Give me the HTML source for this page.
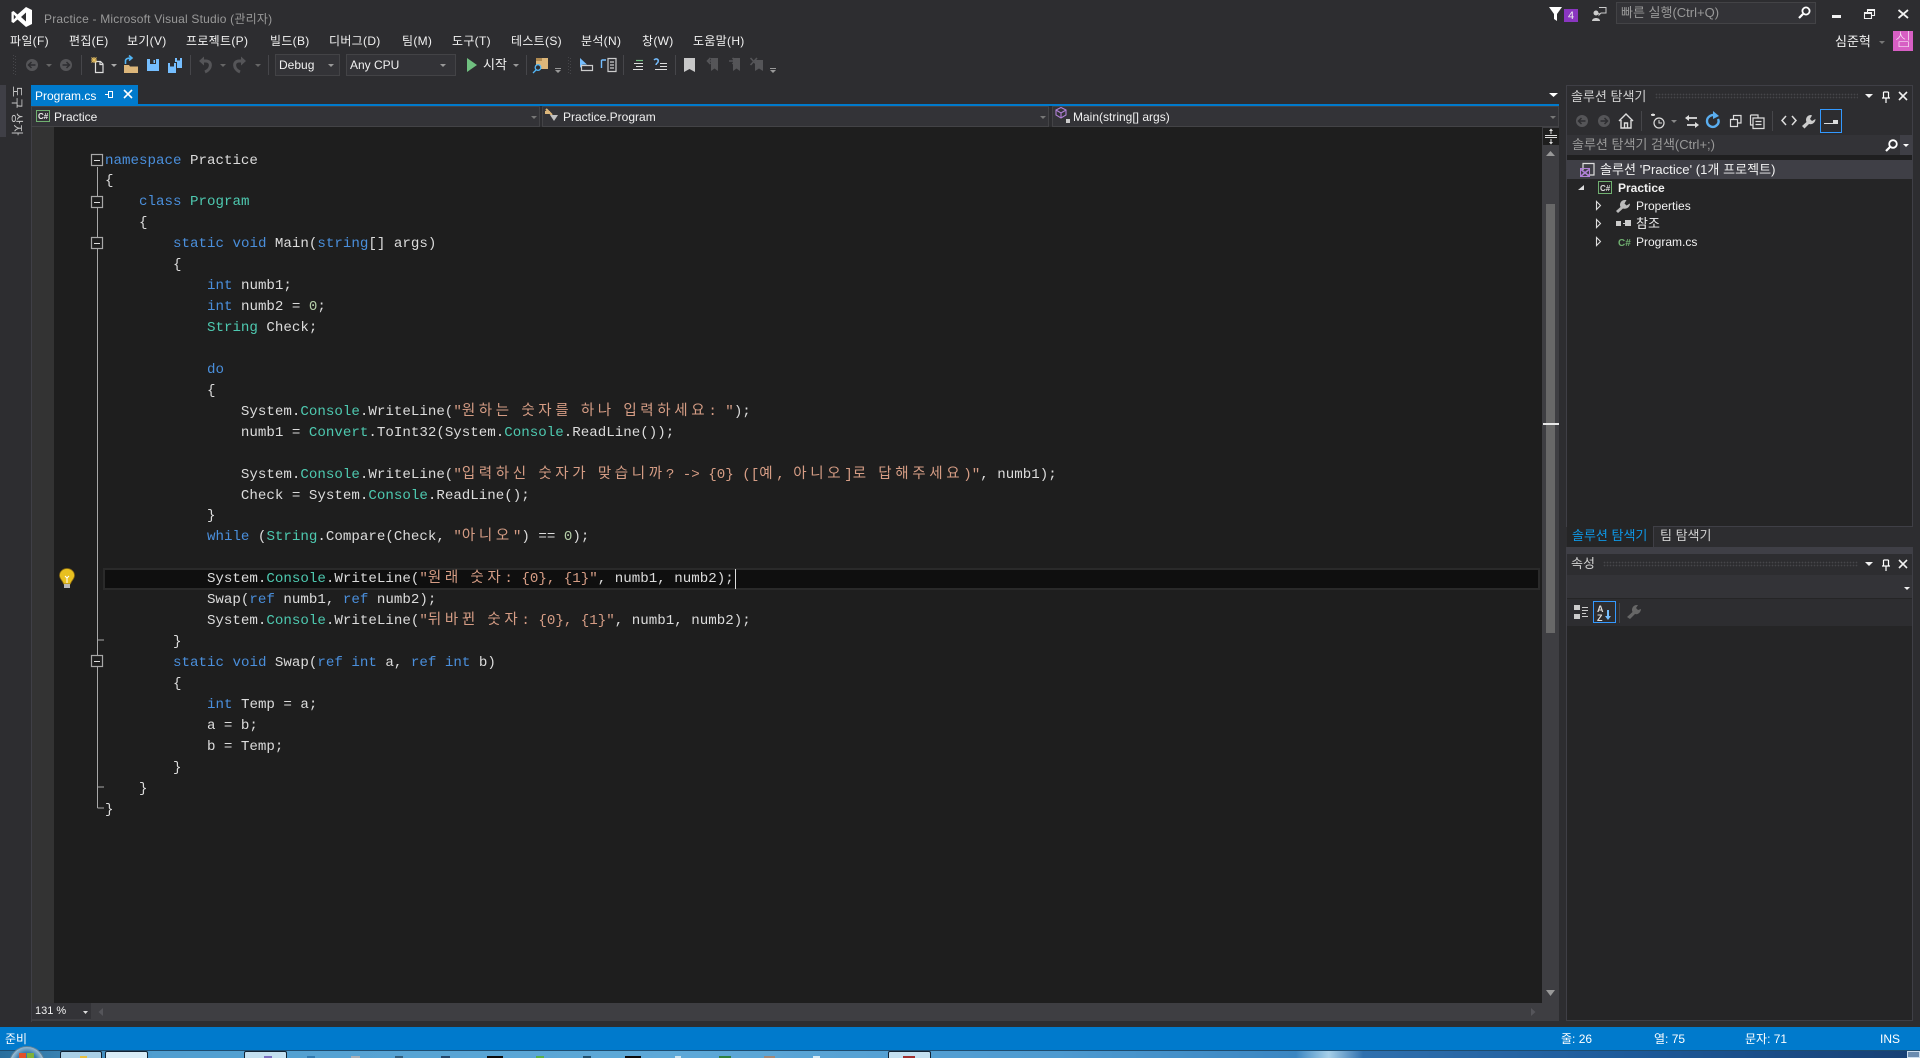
<!DOCTYPE html>
<html lang="ko"><head><meta charset="utf-8"><title>Practice - Microsoft Visual Studio</title>
<style>
html,body{margin:0;padding:0;width:1920px;height:1058px;overflow:hidden;background:#2d2d30}
body{position:relative;font-family:"Liberation Sans","Noto Sans CJK KR",sans-serif;font-size:12px;color:#f1f1f1}
.a{position:absolute}
.t{position:absolute;white-space:pre;line-height:16px;font-size:12px;color:#f1f1f1}
.m{top:33px;letter-spacing:.3px}
.h{font-size:13px}
#code{position:absolute;left:105px;top:150.5px;font-family:"Liberation Mono",monospace;font-size:14.17px;color:#dcdcdc;line-height:20.94px}
.l{white-space:pre;height:20.94px}
b{font-weight:normal;color:#4a8fdc}
u{text-decoration:none;color:#4ec9b0}
em{font-style:normal;color:#d69d85}
var{font-style:normal;color:#b5cea8}
small{font-family:"Noto Sans CJK KR",sans-serif;font-size:14.5px;letter-spacing:3.66px;line-height:0}
svg{position:absolute;left:0;top:0;overflow:visible}
</style></head><body>

<!-- left strip -->
<div class="a" style="left:0;top:85px;width:6px;height:52px;background:#3f3f46"></div>
<div class="t" style="left:8px;top:86px;height:50px;color:#c8c8c8;writing-mode:vertical-rl;text-orientation:sideways;line-height:18px;letter-spacing:.5px;font-size:12px">도구 상자</div>

<!-- tab + nav -->
<div class="a" style="left:31px;top:85px;width:107px;height:19px;background:#007acc"></div>
<div class="a" style="left:31px;top:104px;width:1528px;height:2px;background:#007acc"></div>
<div class="t" style="left:35px;top:88px;color:#fff">Program.cs</div>
<div class="a" style="left:31px;top:106px;width:509px;height:21px;background:#333337;box-sizing:border-box;border:1px solid #434346"></div>
<div class="a" style="left:542px;top:106px;width:507px;height:21px;background:#333337;box-sizing:border-box;border:1px solid #434346"></div>
<div class="a" style="left:1052px;top:106px;width:507px;height:21px;background:#333337;box-sizing:border-box;border:1px solid #434346"></div>
<div class="t" style="left:54px;top:109px">Practice</div>
<div class="t" style="left:563px;top:109px">Practice.Program</div>
<div class="t" style="left:1073px;top:109px">Main(string[] args)</div>

<!-- editor -->
<div class="a" style="left:31px;top:127px;width:1px;height:895px;background:#3f3f46"></div>
<div class="a" style="left:32px;top:127px;width:22px;height:876px;background:#333333"></div>
<div class="a" style="left:54px;top:127px;width:1488px;height:876px;background:#1e1e1e"></div>
<div class="a" style="left:103px;top:568px;width:1437px;height:22px;box-sizing:border-box;background:#0f0f0f;border:2px solid #2a2a2a"></div>
<div class="a" style="left:735px;top:569px;width:1px;height:20px;background:#dcdcdc"></div>

<div id="code">
<div class="l"><b>namespace</b> Practice</div>
<div class="l">{</div>
<div class="l">    <b>class</b> <u>Program</u></div>
<div class="l">    {</div>
<div class="l">        <b>static</b> <b>void</b> Main(<b>string</b>[] args)</div>
<div class="l">        {</div>
<div class="l">            <b>int</b> numb1;</div>
<div class="l">            <b>int</b> numb2 = <var>0</var>;</div>
<div class="l">            <u>String</u> Check;</div>
<div class="l"> </div>
<div class="l">            <b>do</b></div>
<div class="l">            {</div>
<div class="l">                System.<u>Console</u>.WriteLine(<em>"<small>원하는</small> <small>숫자를</small> <small>하나</small> <small>입력하세요</small>: "</em>);</div>
<div class="l">                numb1 = <u>Convert</u>.ToInt32(System.<u>Console</u>.ReadLine());</div>
<div class="l"> </div>
<div class="l">                System.<u>Console</u>.WriteLine(<em>"<small>입력하신</small> <small>숫자가</small> <small>맞습니까</small>? -&gt; {0} ([<small>예</small>, <small>아니오</small>]<small>로</small> <small>답해주세요</small>)"</em>, numb1);</div>
<div class="l">                Check = System.<u>Console</u>.ReadLine();</div>
<div class="l">            }</div>
<div class="l">            <b>while</b> (<u>String</u>.Compare(Check, <em>"<small>아니오</small>"</em>) == <var>0</var>);</div>
<div class="l"> </div>
<div class="l">            System.<u>Console</u>.WriteLine(<em>"<small>원래</small> <small>숫자</small>: {0}, {1}"</em>, numb1, numb2);</div>
<div class="l">            Swap(<b>ref</b> numb1, <b>ref</b> numb2);</div>
<div class="l">            System.<u>Console</u>.WriteLine(<em>"<small>뒤바뀐</small> <small>숫자</small>: {0}, {1}"</em>, numb1, numb2);</div>
<div class="l">        }</div>
<div class="l">        <b>static</b> <b>void</b> Swap(<b>ref</b> <b>int</b> a, <b>ref</b> <b>int</b> b)</div>
<div class="l">        {</div>
<div class="l">            <b>int</b> Temp = a;</div>
<div class="l">            a = b;</div>
<div class="l">            b = Temp;</div>
<div class="l">        }</div>
<div class="l">    }</div>
<div class="l">}</div>
</div>

<!-- scrollbars -->
<div class="a" style="left:1542px;top:127px;width:17px;height:894px;background:#3e3e42"></div>
<div class="a" style="left:1543px;top:128px;width:16px;height:17px;background:#1e1e1e"></div>
<div class="a" style="left:1546px;top:204px;width:9px;height:429px;background:#686868"></div>
<div class="a" style="left:1543px;top:423px;width:16px;height:2px;background:#e8e8e8"></div>
<div class="a" style="left:32px;top:1003px;width:1510px;height:18px;background:#3e3e42"></div>
<div class="a" style="left:32px;top:1003px;width:59px;height:16px;background:#333337"></div>
<div class="t" style="left:35px;top:1003px;font-size:11px;color:#f1f1f1">131 %</div>

<!-- title / menu -->
<div class="t" style="left:44px;top:11px;color:#999;letter-spacing:.2px">Practice - Microsoft Visual Studio (관리자)</div>
<div class="t m" style="left:10px">파일(F)</div>
<div class="t m" style="left:69px">편집(E)</div>
<div class="t m" style="left:127px">보기(V)</div>
<div class="t m" style="left:186px">프로젝트(P)</div>
<div class="t m" style="left:270px">빌드(B)</div>
<div class="t m" style="left:329px">디버그(D)</div>
<div class="t m" style="left:402px">팀(M)</div>
<div class="t m" style="left:452px">도구(T)</div>
<div class="t m" style="left:511px">테스트(S)</div>
<div class="t m" style="left:581px">분석(N)</div>
<div class="t m" style="left:642px">창(W)</div>
<div class="t m" style="left:693px">도움말(H)</div>

<!-- toolbar combos -->
<div class="a" style="left:275px;top:54px;width:65px;height:22px;box-sizing:border-box;background:#333337;border:1px solid #434346"></div>
<div class="a" style="left:346px;top:54px;width:110px;height:22px;box-sizing:border-box;background:#333337;border:1px solid #434346"></div>
<div class="t" style="left:279px;top:57px">Debug</div>
<div class="t" style="left:350px;top:57px">Any CPU</div>
<div class="t h" style="left:483px;top:57px">시작</div>

<!-- top-right -->
<div class="a" style="left:1564px;top:9px;width:14px;height:13px;background:#8a36c0"></div>
<div class="t" style="left:1568px;top:8px;font-size:11px;color:#eee">4</div>
<div class="a" style="left:1616px;top:2px;width:200px;height:22px;box-sizing:border-box;background:#333337;border:1px solid #434346"></div>
<div class="t h" style="left:1621px;top:5px;color:#999">빠른 실행(Ctrl+Q)</div>
<div class="t h" style="left:1835px;top:34px;color:#f1f1f1">심준혁</div>
<div class="a" style="left:1893px;top:31px;width:20px;height:20px;background:#d75fc4"></div>
<div class="t" style="left:1893px;top:29px;width:20px;text-align:center;font-size:18px;line-height:22px;color:#fff;font-weight:100">심</div>

<!-- solution explorer -->
<div class="a" style="left:1566px;top:85px;width:347px;height:442px;box-sizing:border-box;background:#252526;border:1px solid #3f3f46"></div>
<div class="a" style="left:1567px;top:86px;width:345px;height:49px;background:#2d2d30"></div>
<div class="t h" style="left:1571px;top:89px;color:#d0d0d0">솔루션 탐색기</div>
<div class="a" style="left:1655px;top:93px;width:203px;height:6px;background-image:radial-gradient(#46464a 35%,transparent 40%);background-size:3px 3px"></div>
<div class="a" style="left:1567px;top:135px;width:345px;height:20px;background:#333337"></div>
<div class="a" style="left:1900px;top:135px;width:12px;height:20px;background:#3f3f46"></div>
<div class="t h" style="left:1572px;top:137px;color:#999">솔루션 탐색기 검색(Ctrl+;)</div>
<div class="a" style="left:1567px;top:155px;width:345px;height:5px;background:#1f1f20"></div>
<div class="a" style="left:1567px;top:160px;width:345px;height:19px;background:#3f3f46"></div>
<div class="t h" style="left:1600px;top:162px;letter-spacing:.05px">솔루션 'Practice' (1개 프로젝트)</div>
<div class="t" style="left:1618px;top:180px;font-weight:bold">Practice</div>
<div class="t" style="left:1636px;top:198px">Properties</div>
<div class="t h" style="left:1636px;top:216px">참조</div>
<div class="t" style="left:1636px;top:234px">Program.cs</div>

<!-- tabs under explorer -->
<div class="a" style="left:1567px;top:527px;width:346px;height:20px;background:#2d2d30"></div>
<div class="a" style="left:1567px;top:526px;width:86px;height:21px;background:#252526"></div>
<div class="a" style="left:1653px;top:526px;width:1px;height:21px;background:#3f3f46"></div>
<div class="t h" style="left:1572px;top:528px;color:#0e97e6">솔루션 탐색기</div>
<div class="t h" style="left:1660px;top:528px;color:#d0d0d0">팀 탐색기</div>
<div class="a" style="left:1566px;top:547px;width:347px;height:7px;background:#3f3f46"></div>

<!-- properties -->
<div class="a" style="left:1566px;top:554px;width:347px;height:467px;box-sizing:border-box;background:#252526;border:1px solid #3f3f46;border-top:0"></div>
<div class="a" style="left:1567px;top:554px;width:345px;height:21px;background:#2d2d30"></div>
<div class="t h" style="left:1571px;top:556px;color:#d0d0d0">속성</div>
<div class="a" style="left:1603px;top:561px;width:255px;height:6px;background-image:radial-gradient(#46464a 35%,transparent 40%);background-size:3px 3px"></div>
<div class="a" style="left:1567px;top:575px;width:345px;height:23px;background:#333337"></div>
<div class="a" style="left:1567px;top:599px;width:345px;height:27px;background:#2d2d30"></div>

<!-- status -->
<div class="a" style="left:0;top:1027px;width:1920px;height:23px;background:#007acc"></div>
<div class="t" style="left:5px;top:1031px;color:#fff">준비</div>
<div class="t" style="left:1561px;top:1031px;color:#fff">줄: 26</div>
<div class="t" style="left:1654px;top:1031px;color:#fff">열: 75</div>
<div class="t" style="left:1745px;top:1031px;color:#fff">문자: 71</div>
<div class="t" style="left:1880px;top:1031px;color:#fff">INS</div>

<!-- taskbar -->
<div class="a" style="left:0;top:1050px;width:1920px;height:8px;background:linear-gradient(90deg,#2a6f9e 0,#4f9ed0 8%,#5ea9d8 35%,#4d9ad0 55%,#3a86c2 67.5%,#a6cfe8 69.2%,#2f70ae 71%,#1d5a9a 85%,#173f73 100%)"></div>
<div class="a" style="left:0;top:1050px;width:1920px;height:1px;background:#1d4d70"></div>
<div class="a" style="left:60px;top:1051px;width:42px;height:7px;background:#a9cfe6;border:1px solid #123;border-bottom:0;box-sizing:border-box;border-radius:2px 2px 0 0"></div>
<div class="a" style="left:105px;top:1051px;width:43px;height:7px;background:#d9ecf6;border:1px solid #123;border-bottom:0;box-sizing:border-box;border-radius:2px 2px 0 0"></div>
<div class="a" style="left:244px;top:1051px;width:43px;height:7px;background:#c4e0f0;border:1px solid #123;border-bottom:0;box-sizing:border-box;border-radius:2px 2px 0 0"></div>
<div class="a" style="left:888px;top:1051px;width:43px;height:7px;background:#c4e0f0;border:1px solid #123;border-bottom:0;box-sizing:border-box;border-radius:2px 2px 0 0"></div>
<div class="a" style="left:1907px;top:1051px;width:13px;height:7px;background:#6b8cb0;border:1px solid #cde;box-sizing:border-box"></div>
<div class="a" style="left:9px;top:1046px;width:36px;height:36px;box-sizing:border-box;border-radius:50%;border:1px solid #5f8298;background:radial-gradient(circle at 50% 45%,#2c6ca0 0,#3a7fb0 40%,#bcd3e2 70%,#dfe9f0 100%)"></div>
<div class="a" style="left:19px;top:1053px;width:7px;height:5px;background:#e0502a"></div>
<div class="a" style="left:27px;top:1053px;width:7px;height:5px;background:#7fb13a"></div>
<div class="a" style="left:80px;top:1056px;width:7px;height:2px;background:#e8c040"></div>
<div class="a" style="left:264px;top:1056px;width:8px;height:2px;background:#7a6fc0"></div>
<div class="a" style="left:307px;top:1056px;width:8px;height:2px;background:#2f7ab0"></div>
<div class="a" style="left:351px;top:1056px;width:9px;height:2px;background:#a8b0b8"></div>
<div class="a" style="left:395px;top:1056px;width:8px;height:2px;background:#2f5f80"></div>
<div class="a" style="left:441px;top:1056px;width:9px;height:2px;background:#24486c"></div>
<div class="a" style="left:487px;top:1056px;width:16px;height:2px;background:#0b0b0b"></div>
<div class="a" style="left:536px;top:1056px;width:8px;height:2px;background:#58b04a"></div>
<div class="a" style="left:583px;top:1056px;width:8px;height:2px;background:#20506e"></div>
<div class="a" style="left:625px;top:1056px;width:16px;height:2px;background:#0b0b0b"></div>
<div class="a" style="left:675px;top:1056px;width:6px;height:2px;background:#cfe6f2"></div>
<div class="a" style="left:719px;top:1056px;width:12px;height:2px;background:#2e8040"></div>
<div class="a" style="left:764px;top:1056px;width:11px;height:2px;background:#a08878"></div>
<div class="a" style="left:813px;top:1056px;width:7px;height:2px;background:#d8ecf6"></div>
<div class="a" style="left:903px;top:1056px;width:12px;height:2px;background:#a03030"></div>

<!-- icons -->
<svg width="1920" height="1058" viewBox="0 0 1920 1058" fill="none">
<!-- VS logo -->
<path fill="#fff" fill-rule="evenodd" d="M26 7L32 10V24L26 27L17.5 19.5L13.5 23L11.5 22V12L13.5 11L17.5 14.5ZM26 12.5L21 17L26 21.5ZM13.8 14.5V19.500L16 17Z"/>
<!-- grips -->
<g stroke="#46464a" stroke-dasharray="1 2"><path d="M13.500 55V75M15.500 56V75M568.500 57V74M570.500 58V74"/></g>
<!-- toolbar separators -->
<g fill="#46464a"><rect x="81" y="55" width="1" height="20"/><rect x="190" y="55" width="1" height="20"/><rect x="268" y="55" width="1" height="20"/><rect x="526" y="55" width="1" height="20"/><rect x="623" y="55" width="1" height="20"/><rect x="675" y="55" width="1" height="20"/></g>
<!-- back / fwd -->
<g fill="#555558"><circle cx="32" cy="65" r="6"/><circle cx="66" cy="65" r="6"/></g>
<g stroke="#2d2d30" stroke-width="1.5"><path d="M35.500 65H29M31.500 62L28.500 65L31.500 68"/><path d="M62.500 65H69M66.500 62L69.500 65L66.500 68"/></g>
<!-- dropdown arrows dim -->
<g fill="#666"><path d="M46 64H52L49 67Z"/><path d="M220 64H226L223 67Z"/><path d="M255 64H261L258 67Z"/></g>
<g fill="#aaa"><path d="M111 64H117L114 67Z"/><path d="M328 64H334L331 67Z" fill="#999"/><path d="M440 64H446L443 67Z" fill="#999"/><path d="M513 64H519L516 67Z" fill="#999"/></g>
<!-- new project -->
<path stroke="#ddd" stroke-width="1.200" d="M95.500 61.500H100.500L103 64V72.500H95.500ZM100 61.500V64.500H103"/><path stroke="#e8c060" stroke-width="1.100" d="M91 60H97M94 57V63M91.500 57.500L96.500 62.500M96.500 57.500L91.500 62.500"/>
<!-- open -->
<path fill="#dcb67a" d="M124 65H129L130 66.500H138V73H124Z"/><path stroke="#52b5f5" stroke-width="1.600" d="M125.500 64V61C125.500 59 127 58 131 58M129 55.500L132 58L129 60.500"/>
<!-- save -->
<path fill="#75beff" d="M147 59H159V71H147Z"/><path fill="#2d2d30" d="M150 59H156V64H150Z"/><path fill="#75beff" d="M153.500 60H155V63H153.500Z"/>
<!-- save all -->
<path fill="#75beff" d="M168 63H176V73H168ZM175 58H182V68H177V62H175Z"/><path fill="#2d2d30" d="M170 63H174V66.500H170ZM177 58H180V60.500H177Z"/>
<!-- undo / redo -->
<path stroke="#555558" stroke-width="3" d="M202 61L206 61C212 61 212 69 205 72"/><path fill="#555558" d="M199 61L204 56.500V65.500Z"/>
<path stroke="#555558" stroke-width="3" d="M243 61L239 61C233 61 233 69 240 72"/><path fill="#555558" d="M246 61L241 56.500V65.500Z"/>
<!-- play -->
<path fill="#70c080" d="M467 58L477 65L467 72Z"/>
<!-- find -->
<path fill="#dcb67a" d="M536 58H548V69H536Z"/><path fill="#b08a50" d="M536 58H542V61H536Z"/><circle cx="538" cy="67.500" r="2.800" fill="#2d2d30" stroke="#52b5f5" stroke-width="1.300"/><path stroke="#52b5f5" stroke-width="1.300" d="M536 70L533 73"/>
<path fill="#999" d="M555 68H561V69H555ZM555 70H561L558 73Z"/>
<!-- toolbar icons after grip -->
<path fill="#75beff" d="M580 58L587 64.500H582.500L580 68Z"/><path stroke="#ccc" stroke-width="1.200" d="M581.500 65.500H592.500V70.500H581.500Z"/>
<path stroke="#ccc" stroke-width="1.200" d="M608 58.500H616V71.500H608ZM610 62H614M610 65H614M610 68H614"/><path stroke="#75beff" stroke-width="1.400" d="M601.500 60H606M601.500 60V68"/>
<path stroke="#ddd" stroke-width="1.100" d="M634 63.500H643M636 66.500H643M633 69.500H643"/><path stroke="#70c080" stroke-width="1.200" d="M636 60.500H643"/>
<path stroke="#ddd" stroke-width="1.100" d="M660 63.500H667M660 66.500H667M655 69.500H667"/><path stroke="#75beff" stroke-width="1.500" d="M654 60C656 58 659 59 658 62C658 63 656 63 656 65"/>
<!-- bookmarks -->
<path fill="#c8c8c8" d="M684 58H695V72L689.500 69L684 72Z"/>
<g fill="#555558"><path d="M711 58H718V71L714.500 68.500L711 71Z"/><path d="M733 58H740V71L736.500 68.500L733 71Z"/><path d="M755 60H763V71L759 68.500L755 71Z"/></g>
<g stroke="#555558" stroke-width="1.600"><path d="M714 61H707.500M710.500 58L707.500 61L710.500 64"/><path d="M729 61H735.500M732.500 58L735.500 61L732.500 64"/><path d="M750.500 58L757 65M757 58L750.500 65"/></g>
<path fill="#999" d="M770 68H776V69H770ZM770 70H776L773 73Z"/>
<!-- tab pin x -->
<path stroke="#fff" stroke-width="1" d="M105 94.500H108.500M108.500 91.500V97.500H112.500V91.500Z"/>
<path stroke="#fff" stroke-width="1.600" d="M124 90L132 98M132 90L124 98"/>
<path fill="#fff" d="M1549 93H1558L1553.500 97Z"/>
<!-- nav icons -->
<rect x="36.500" y="110.500" width="13" height="11" stroke="#70b070"/><text x="38" y="119" font-family="Liberation Sans" font-size="8" fill="#eee" font-weight="bold">C#</text>
<path stroke="#dcb67a" stroke-width="2" d="M546 109L552 115"/><path fill="#c0c0c0" d="M550 115L558 115L554 121Z"/><rect x="545" y="111" width="5" height="3" fill="#dcb67a"/>
<path stroke="#b180d7" stroke-width="1.100" d="M1056 110L1061 107.500L1066 110V115L1061 118L1056 115ZM1056 110L1061 113L1066 110M1061 113V118"/><rect x="1066" y="119" width="4" height="4" fill="#ccc"/>
<g fill="#777"><path d="M531 116H537L534 119Z"/><path d="M1040 116H1046L1043 119Z"/><path d="M1550 116H1556L1553 119Z"/></g>
<!-- outlining -->
<g stroke="#a8a8a8" stroke-width="1">
<path d="M97.500 167V196M97.500 208V237M97.500 249V655M97.500 667V808" />
<path d="M97.500 640H104M97.500 787H104M97.500 808H104" />
</g>
<g stroke="#a8a8a8" fill="#1e1e1e" stroke-width="1.200">
<rect x="91.500" y="154.500" width="11" height="11"/><rect x="91.500" y="196.500" width="11" height="11"/><rect x="91.500" y="237.500" width="11" height="11"/><rect x="91.500" y="655.500" width="11" height="11"/>
</g>
<g stroke="#dcdcdc" stroke-width="1"><path d="M94 160.500H100M94 202.500H100M94 243.500H100M94 661.500H100"/></g>
<!-- bulb -->
<path fill="#e8c020" stroke="#8a6a10" stroke-width=".8" d="M67 568.500C71 568.500 74.500 571.500 74.500 575.500C74.500 579 71 581 70.500 584H63.500C63 581 59.500 579 59.500 575.500C59.500 571.500 63 568.500 67 568.500Z"/><rect x="64" y="584" width="6" height="4" fill="#b8b8b8"/><path stroke="#fff" stroke-width="1" d="M65 576L67 578L69 576M67 578V583"/>
<!-- splitter -->
<path stroke="#ddd" stroke-width="1" d="M1545 135.500H1557M1545 137.500H1557M1551 129V134M1551 139V144"/><path fill="#ddd" d="M1549 131L1551 128.500L1553 131ZM1549 142L1551 144.500L1553 142Z"/>
<!-- scroll arrows -->
<path fill="#999" d="M1546 156H1555L1550.500 151Z"/><path fill="#999" d="M1546 990H1555L1550.500 996Z"/>
<path fill="#55555a" d="M103 1008V1016L98.500 1012Z"/><path fill="#55555a" d="M1531 1008V1016L1535.500 1012Z"/>
<path fill="#ddd" d="M83 1011H88L85.500 1014Z"/>
<!-- top right -->
<path fill="#fff" d="M1549 7H1562L1557 14V21L1554 19V14Z"/>
<path stroke="#ccc" stroke-width="1" d="M1599 7.500H1606V13H1601L1599 15V13"/><circle cx="1596" cy="13" r="2.500" fill="#ccc"/><path fill="#ccc" d="M1592 21C1592 17 1600 17 1600 21Z"/>
<circle cx="1806" cy="11" r="3.600" stroke="#fff" stroke-width="1.800"/><path stroke="#fff" stroke-width="2.200" d="M1803 14L1799 18"/>
<rect x="1832" y="15" width="9" height="3" fill="#f1f1f1"/>
<path stroke="#f1f1f1" stroke-width="1.100" d="M1867.500 12V9.500H1874.500V15.500H1871.500M1864.500 12.500H1871.500V18.500H1864.500Z"/><path stroke="#f1f1f1" stroke-width="1" d="M1867.500 10.500H1874.500M1864.500 13.500H1871.500"/>
<path stroke="#f1f1f1" stroke-width="1.800" d="M1898.500 10L1908 18M1908 10L1898.500 18"/>
<path fill="#777" d="M1879 41H1885L1882 44Z"/>
<!-- SE title icons -->
<path fill="#f1f1f1" d="M1865 94H1873L1869 98Z"/><path stroke="#fff" stroke-width="1.200" d="M1883.500 92V98H1888.500V92M1883.500 92H1888.500M1882 98H1890M1886 98V103"/><path stroke="#f1f1f1" stroke-width="1.600" d="M1899 92L1907 100M1907 92L1899 100"/>
<path fill="#f1f1f1" d="M1865 562H1873L1869 566Z"/><path stroke="#fff" stroke-width="1.200" d="M1883.500 560V566H1888.500V560M1883.500 560H1888.500M1882 566H1890M1886 566V571"/><path stroke="#f1f1f1" stroke-width="1.600" d="M1899 560L1907 568M1907 560L1899 568"/>
<path fill="#f1f1f1" d="M1904 587H1910L1907 590Z"/>
<!-- SE toolbar -->
<g fill="#555558"><circle cx="1582" cy="121" r="6"/><circle cx="1604" cy="121" r="6"/></g>
<g stroke="#2d2d30" stroke-width="1.500"><path d="M1585.500 121H1579M1581.500 118L1578.500 121L1581.500 124"/><path d="M1600.500 121H1607M1604.500 118L1607.500 121L1604.500 124"/></g>
<path stroke="#ddd" stroke-width="1.400" d="M1619 121L1626 114L1633 121M1621 120V128H1631V120M1624.500 128V123H1627.500V128"/>
<g fill="#46464a"><rect x="1641" y="111" width="1" height="20"/><rect x="1772" y="111" width="1" height="20"/></g>
<circle cx="1659" cy="123" r="5" stroke="#ddd" stroke-width="1.200"/><path stroke="#ddd" d="M1659 120V123H1662M1651 114.500H1655"/><path fill="#ddd" d="M1653 113L1655 116H1651Z"/>
<path fill="#888" d="M1671 120H1677L1674 123Z"/>
<path stroke="#ddd" stroke-width="1.800" d="M1688 118H1697M1687 125H1696"/><path fill="#ddd" d="M1689 115V121L1685 118ZM1695 122V128L1699 125Z"/>
<path stroke="#5aaef0" stroke-width="2.400" d="M1717 116C1712 113 1707 117 1707 121C1707 126 1713 129 1717 125C1719 123 1719 121 1718 119"/><path fill="#5aaef0" d="M1713 111L1719 116L1713 119Z"/>
<path stroke="#ddd" stroke-width="1.200" d="M1730.500 119.500H1737.500V126.500H1730.500ZM1733.500 119V115.500H1741V123H1737.500"/>
<path stroke="#ddd" stroke-width="1.200" d="M1750.500 115H1758V118M1753 118H1764V128.500H1753ZM1755.500 121.500H1761.500M1755.500 124.500H1761.500M1750.500 115V125H1753"/>
<path stroke="#ddd" stroke-width="1.500" d="M1786 116L1782 120.500L1786 125M1792 116L1796 120.500L1792 125"/>
<path fill="#ccc" d="M1811 115C1807 115 1805 119 1806.500 122L1802 126L1804.500 128.500L1809 124C1812 125 1815.500 122.500 1815.500 119L1812 121L1810 119L1812 115.500Z"/>
<rect x="1820.500" y="109.500" width="21" height="23" stroke="#3399ff"/><path fill="#ddd" d="M1824 123H1833V120H1838V124H1824Z"/>
<!-- SE search -->
<circle cx="1893" cy="144" r="3.800" stroke="#fff" stroke-width="1.800"/><path stroke="#fff" stroke-width="2.200" d="M1890 147L1886 151"/><path fill="#fff" d="M1903 144H1909L1906 147Z"/>
<!-- tree -->
<path stroke="#ddd" stroke-width="1.200" d="M1583 170V163.500H1594V175H1588"/><path stroke="#b180d7" stroke-width="1.600" d="M1581 169.500L1589 176M1589 169.500L1581 176"/><rect x="1580.500" y="168.500" width="9" height="8" stroke="#b180d7"/>
<path fill="#ddd" d="M1578 190H1584V185Z"/>
<rect x="1598.500" y="181.500" width="13" height="12" stroke="#70b070"/><text x="1600" y="191" font-family="Liberation Sans" font-size="8" fill="#ddd" font-weight="bold">C#</text>
<g stroke="#ddd" stroke-width="1.100"><path d="M1596.500 201.500L1600.500 205.500L1596.500 209.500Z"/><path d="M1596.500 219.500L1600.500 223.500L1596.500 227.500Z"/><path d="M1596.500 237.500L1600.500 241.500L1596.500 245.500Z"/></g>
<path fill="#bbb" d="M1625 200C1621 200 1619 204 1620.500 207L1616 211L1618 213L1623 208.500C1626 209.500 1630 207.500 1630 203.500L1626.500 205.500L1624.500 203.500L1626.500 200Z"/>
<g fill="#ccc"><rect x="1616" y="221" width="5" height="5"/><rect x="1623" y="223" width="2" height="1"/><rect x="1625" y="220" width="6" height="6"/></g>
<text x="1618" y="246" font-family="Liberation Sans" font-size="10" fill="#70b070" font-weight="bold">C#</text>
<!-- properties toolbar -->
<g stroke="#ccc"><path d="M1582 607.500H1588M1582 610.500H1588M1582 613.500H1586M1582 616.500H1588"/></g>
<g fill="#ccc"><rect x="1574" y="605" width="6" height="5"/><rect x="1574" y="614" width="6" height="5"/></g>
<rect x="1593.500" y="601.500" width="22" height="21" stroke="#3399ff"/>
<text x="1597" y="612" font-family="Liberation Sans" font-size="9" font-weight="bold" fill="#ddd">A</text><text x="1597" y="621" font-family="Liberation Sans" font-size="9" font-weight="bold" fill="#ddd">Z</text>
<path stroke="#75beff" stroke-width="2" d="M1608 610V618"/><path fill="#75beff" d="M1605 616H1611L1608 620Z"/>
<rect x="1619" y="603" width="1" height="20" fill="#46464a"/>
<path fill="#666" d="M1637 605C1633 605 1631 609 1632.500 612L1627 617L1630 619L1635 614C1638 615 1641 612 1641 609L1638 610L1636 608L1638 605Z"/>
</svg>
</body></html>
